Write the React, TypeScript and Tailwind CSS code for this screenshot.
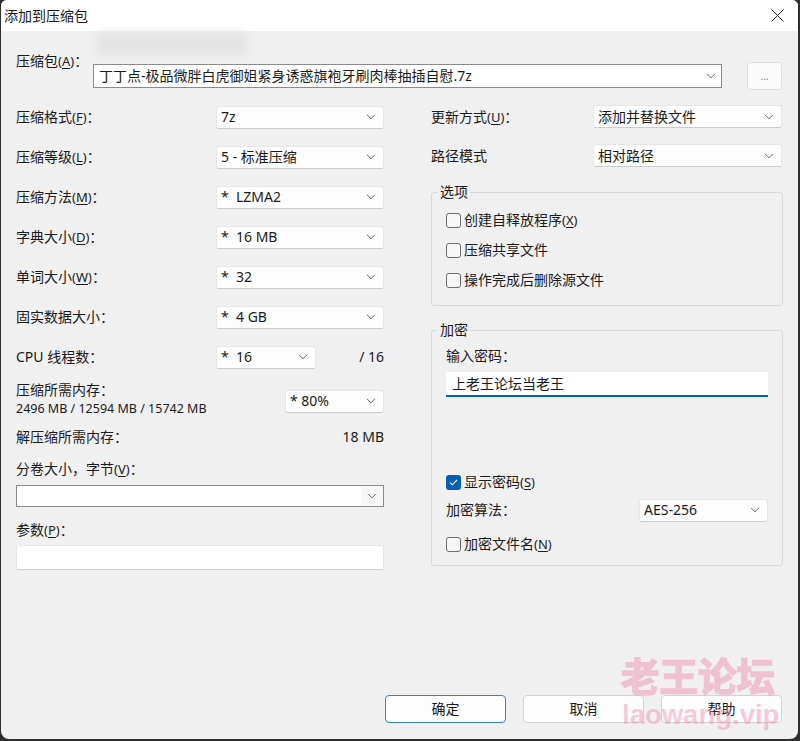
import React from "react";

// chevron for dropdowns
function Chevron() {
  return (
    <svg width="10" height="6" viewBox="0 0 10 6" fill="none">
      <path d="M1 0.8l4 4 4-4" stroke="#5f5f5f" strokeWidth="1" />
    </svg>
  );
}

function Label({ text, k, colon = true }: { text: string; k?: string; colon?: boolean }) {
  return (
    <span className="whitespace-pre">
      {text}
      {k && (
        <span className="text-[13px]">
          (<u className="underline-offset-2">{k}</u>)
        </span>
      )}
      {colon && "："}
    </span>
  );
}

function Select({ value, className }: { value: string; className: string }) {
  return (
    <div
      className={`flex h-[23px] items-center justify-between rounded-[3px] border border-[#e6e6e6] border-b-[#cdcdcd] bg-[#fdfdfd] pl-[4px] pr-[7px] ${className}`}
    >
      <span className="whitespace-pre">{value}</span>
      <Chevron />
    </div>
  );
}

function CheckBox({ label, k, checked = false }: { label: string; k?: string; checked?: boolean }) {
  return (
    <div className="flex items-center gap-[3px]">
      {checked ? (
        <span className="flex h-[15px] w-[15px] items-center justify-center rounded-[3px] bg-[#005fb8]">
          <svg width="9" height="7" viewBox="0 0 9 7" fill="none">
            <path d="M1 3.6l2.3 2.2L8 1" stroke="#fff" strokeWidth="1.1" />
          </svg>
        </span>
      ) : (
        <span className="h-[15px] w-[15px] rounded-[3px] border border-[#6b6b6b] bg-[#f7f7f7]" />
      )}
      <Label text={label} k={k} colon={false} />
    </div>
  );
}

function Row({ label, k, value, colon = true }: { label: string; k?: string; value: string; colon?: boolean }) {
  return (
    <div className="flex h-[40px] items-center justify-between">
      <Label text={label} k={k} colon={colon} />
      <Select value={value} className="w-[168px]" />
    </div>
  );
}

function Btn({ text, primary = false }: { text: string; primary?: boolean }) {
  return (
    <div
      className={`flex h-[28px] w-[121px] items-center justify-center rounded-[4px] border bg-[#fdfdfd] ${
        primary ? "border-[#3b7fcb]" : "border-[#d3d3d3]"
      }`}
    >
      {text}
    </div>
  );
}

export default function App() {
  return (
    <div className="h-[741px] w-[800px] bg-[#2e2e2e] pl-[1px] font-['Noto_Sans','Noto_Sans_CJK_SC',sans-serif] text-[14px] leading-[20px] text-[#1a1a1a]">
      <div className="relative flex h-[739px] w-[797px] flex-col overflow-hidden rounded-b-[8px] rounded-t-[6px] bg-[#f0f0f0]">
        {/* title bar */}
        <div className="flex h-[31px] items-center justify-between bg-white pl-[3px] pr-[14px]">
          <span>添加到压缩包</span>
          <svg width="13" height="13" viewBox="0 0 13 13" fill="none">
            <path d="M0.5 0.5l12 12M12.5 0.5l-12 12" stroke="#222" strokeWidth="1" />
          </svg>
        </div>

        {/* blurred smudge */}
        <div className="absolute left-[96px] top-[32px] h-[24px] w-[150px] rounded bg-[#dcdcdc] opacity-60 blur-[5px]" />

        {/* archive row */}
        <div className="flex items-start pl-[15px]">
          <div className="w-[77px] pt-[20px]">
            <Label text="压缩包" k="A" />
          </div>
          <div className="mt-[33px] flex h-[24px] w-[629px] items-center justify-between border border-[#8a8a8a] bg-white pl-[5px] pr-[5px]">
            <span>丁丁点-极品微胖白虎御姐紧身诱惑旗袍牙刷肉棒抽插自慰.7z</span>
            <Chevron />
          </div>
          <div className="ml-[25px] mt-[31px] flex h-[28px] w-[35px] items-center justify-center rounded-[4px] border border-[#dedede] bg-[#fbfbfb] text-[10px] text-[#777]">
            ...
          </div>
        </div>

        {/* columns */}
        <div className="mt-[7px] flex pl-[15px]">
          {/* left */}
          <div className="flex w-[368px] flex-col">
            <Row label="压缩格式" k="F" value="7z" />
            <Row label="压缩等级" k="L" value="5 - 标准压缩" />
            <Row label="压缩方法" k="M" value="*  LZMA2" />
            <Row label="字典大小" k="D" value="*  16 MB" />
            <Row label="单词大小" k="W" value="*  32" />
            <Row label="固实数据大小" value="*  4 GB" />
            <div className="flex h-[40px] items-center">
              <span className="w-[200px]">CPU 线程数：</span>
              <Select value="*  16" className="w-[100px]" />
              <span className="flex-1 text-right">/ 16</span>
            </div>
            <div className="flex h-[44px] items-center justify-between">
              <div className="flex flex-col">
                <span className="leading-[20px]">压缩所需内存：</span>
                <span className="text-[12.5px] leading-[18px]">2496 MB / 12594 MB / 15742 MB</span>
              </div>
              <Select value="* 80%" className="mt-[4px] w-[99px]" />
            </div>
            <div className="flex h-[32px] items-center justify-between">
              <span>解压缩所需内存：</span>
              <span>18 MB</span>
            </div>
            <div className="mt-[6px] h-[20px]">
              <Label text="分卷大小，字节" k="V" />
            </div>
            <div className="mt-[6px] flex h-[22px] items-center justify-between border border-[#8a8a8a] bg-white">
              <span />
              <span className="flex h-full w-[22px] items-center justify-center bg-[#f7f7f7]">
                <Chevron />
              </span>
            </div>
            <div className="mt-[13px] h-[20px]">
              <Label text="参数" k="P" />
            </div>
            <div className="mt-[5px] h-[25px] rounded-[2px] border border-[#e6e6e6] border-b-[#cdcdcd] bg-white" />
          </div>

          {/* right */}
          <div className="ml-[47px] flex w-[352px] flex-col">
            <div className="flex h-[39px] items-center justify-between">
              <Label text="更新方式" k="U" />
              <Select value="添加并替换文件" className="mr-[1px] w-[189px]" />
            </div>
            <div className="flex h-[39px] items-center justify-between">
              <Label text="路径模式" colon={false} />
              <Select value="相对路径" className="mr-[1px] w-[189px]" />
            </div>

            <fieldset className="mt-[7px] rounded-[3px] border border-[#d9d9d9] px-[14px] pb-[10px]">
              <legend className="ml-[-8px] px-[2px]">选项</legend>
              <div className="pt-[3px]">
                <div className="flex h-[30px] items-center">
                  <CheckBox label="创建自释放程序" k="X" />
                </div>
                <div className="flex h-[30px] items-center">
                  <CheckBox label="压缩共享文件" />
                </div>
                <div className="flex h-[30px] items-center">
                  <CheckBox label="操作完成后删除源文件" />
                </div>
              </div>
            </fieldset>

            <fieldset className="mt-[14px] rounded-[3px] border border-[#d9d9d9] px-[14px] pb-[7px]">
              <legend className="ml-[-8px] px-[2px]">加密</legend>
              <div className="mt-[6px] h-[20px]">输入密码：</div>
              <div className="mt-[6px] flex h-[25px] items-center border-b-2 border-[#005fb8] bg-white pl-[6px]">
                上老王论坛当老王
              </div>
              <div className="mt-[71px] flex h-[28px] items-center">
                <CheckBox label="显示密码" k="S" checked />
              </div>
              <div className="flex h-[28px] items-center justify-between">
                <span>加密算法：</span>
                <Select value="AES-256" className="w-[129px]" />
              </div>
              <div className="mt-[6px] flex h-[28px] items-center">
                <CheckBox label="加密文件名" k="N" />
              </div>
            </fieldset>
          </div>
        </div>

        {/* buttons */}
        <div className="mt-auto flex justify-end gap-[17px] pb-[16px] pr-[16px]">
          <Btn text="确定" primary />
          <Btn text="取消" />
          <Btn text="帮助" />
        </div>

        {/* watermark */}
        <div className="pointer-events-none absolute left-[620px] top-[652px] flex flex-col items-start text-[#f08aa8] opacity-45">
          <span className="text-[38.5px] font-bold leading-[48px] [-webkit-text-stroke:1.6px_#f08aa8]">老王论坛</span>
          <span className="ml-[1px] mt-[-2px] font-['Liberation_Sans',sans-serif] text-[27.5px] font-bold leading-[34px]">laowang.vip</span>
        </div>
      </div>
    </div>
  );
}
